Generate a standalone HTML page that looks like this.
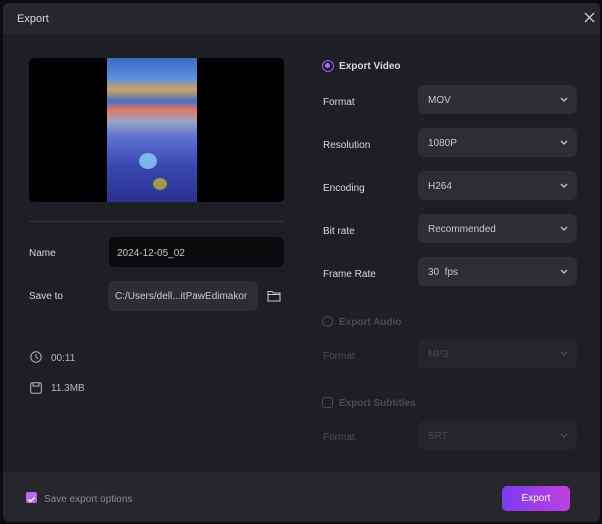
<!DOCTYPE html>
<html><head><style>
*{margin:0;padding:0;box-sizing:border-box}
body{width:602px;height:524px;background:#0c0c0e;font-family:"Liberation Sans",sans-serif;overflow:hidden;position:relative}
.dlg{position:absolute;left:3px;top:3px;width:597px;height:519px;background:#1e1f25;border-radius:6px;overflow:hidden}
.hdr{position:absolute;left:0;top:0;width:100%;height:31px;background:#26272d;color:#d8d8dc;font-size:11px;padding:10px 0 0 14px}
.t{position:absolute;font-size:10px;color:#d8d8dc}
.sel{position:absolute;left:415px;width:159px;height:29px;background:#2d2e34;border-radius:6px;font-size:10px;color:#c8c8cc;padding:10px 0 0 10px}
.sel svg{position:absolute;right:9px;top:12px}
.dim{background:#24252a;color:#4a4b52}
.foot{position:absolute;left:0;top:469px;width:100%;height:50px;background:#26272c}
</style></head><body>
<div class="dlg">
<div class="hdr">Export</div>
<svg style="position:absolute;left:581px;top:9px" width="11" height="11" viewBox="0 0 11 11"><path d="M1 1l9 9M10 1l-9 9" stroke="#c8c8cc" stroke-width="1.4"/></svg>
<div style="position:absolute;left:26px;top:55px;width:255px;height:144px;background:#000;border-radius:5px;overflow:hidden">
<div style="position:absolute;left:78px;top:0;width:90px;height:144px;background:linear-gradient(180deg,#3a6bc8 0%,#5b8ee0 14%,#c9a560 22%,#4a70c8 30%,#e07a60 36%,#9aa5c8 44%,#6070d0 55%,#3848b0 75%,#2a3090 100%)"></div>
<div style="position:absolute;left:110px;top:95px;width:18px;height:16px;border-radius:50%;background:#8fd0ff;opacity:.8"></div>
<div style="position:absolute;left:124px;top:120px;width:14px;height:12px;border-radius:50%;background:#b8b040;opacity:.8"></div>
</div>
<div style="position:absolute;left:26px;top:218px;width:255px;height:1px;background:#33343a"></div>
<div class="t" style="left:26px;top:245px">Name</div>
<div style="position:absolute;left:106px;top:234px;width:175px;height:30px;background:#0b0b0d;border-radius:6px;font-size:10px;color:#c8c8cc;padding:11px 0 0 8px">2024-12-05_02</div>
<div class="t" style="left:26px;top:288px">Save to</div>
<div style="position:absolute;left:105px;top:278px;width:150px;height:30px;background:#2d2e34;border-radius:6px;font-size:10px;color:#c8c8cc;padding:10px 0 0 7px">C:/Users/dell...itPawEdimakor</div>
<svg style="position:absolute;left:264px;top:287px" width="14" height="12" viewBox="0 0 14 12"><path d="M1 1.5h4l1.5 1.5H13v8H1z M1 4.5h12" fill="none" stroke="#c8c8cc" stroke-width="1.1"/></svg>
<svg style="position:absolute;left:27px;top:348px" width="12" height="12" viewBox="0 0 12 12"><circle cx="6" cy="6" r="5.2" fill="none" stroke="#b8b8bc" stroke-width="1"/><path d="M6 3v3l2 2" fill="none" stroke="#b8b8bc" stroke-width="1"/></svg>
<div class="t" style="left:48px;top:350px;color:#b8b8bc">00:11</div>
<svg style="position:absolute;left:27px;top:379px" width="12" height="12" viewBox="0 0 12 12"><rect x="0.7" y="0.7" width="10.6" height="10.6" rx="1.5" fill="none" stroke="#b8b8bc" stroke-width="1"/><path d="M3 1v3h6V1" fill="none" stroke="#b8b8bc" stroke-width="1"/></svg>
<div class="t" style="left:48px;top:380px;color:#b8b8bc">11.3MB</div>

<div style="position:absolute;left:319px;top:57px;width:12px;height:12px;border-radius:50%;border:1.5px solid #a855f7;background:#1e1f25"><div style="margin:2px;width:5px;height:5px;border-radius:50%;background:#b06af0"></div></div>
<div class="t" style="left:336px;top:58px;font-weight:bold">Export Video</div>
<div class="t" style="left:320px;top:94px">Format</div>
<div class="sel" style="top:82px">MOV<svg width="8" height="5"><path d="M1 1l3 3 3-3" fill="none" stroke="#c8c8cc" stroke-width="1.3"/></svg></div>
<div class="t" style="left:320px;top:137px">Resolution</div>
<div class="sel" style="top:125px">1080P<svg width="8" height="5"><path d="M1 1l3 3 3-3" fill="none" stroke="#c8c8cc" stroke-width="1.3"/></svg></div>
<div class="t" style="left:320px;top:180px">Encoding</div>
<div class="sel" style="top:168px">H264<svg width="8" height="5"><path d="M1 1l3 3 3-3" fill="none" stroke="#c8c8cc" stroke-width="1.3"/></svg></div>
<div class="t" style="left:320px;top:223px">Bit rate</div>
<div class="sel" style="top:211px">Recommended<svg width="8" height="5"><path d="M1 1l3 3 3-3" fill="none" stroke="#c8c8cc" stroke-width="1.3"/></svg></div>
<div class="t" style="left:320px;top:266px">Frame Rate</div>
<div class="sel" style="top:254px">30&nbsp; fps<svg width="8" height="5"><path d="M1 1l3 3 3-3" fill="none" stroke="#c8c8cc" stroke-width="1.3"/></svg></div>

<div style="position:absolute;left:319px;top:313px;width:11px;height:11px;border-radius:50%;border:1px solid #4a4b52"></div>
<div class="t" style="left:336px;top:314px;font-weight:bold;color:#4a4b52">Export Audio</div>
<div class="t" style="left:320px;top:348px;color:#4a4b52">Format</div>
<div class="sel dim" style="top:336px">MP3<svg width="8" height="5"><path d="M1 1l3 3 3-3" fill="none" stroke="#4a4b52" stroke-width="1.3"/></svg></div>
<div style="position:absolute;left:319px;top:394px;width:11px;height:11px;border-radius:3px;border:1px solid #4a4b52"></div>
<div class="t" style="left:336px;top:395px;font-weight:bold;color:#4a4b52">Export Subtitles</div>
<div class="t" style="left:320px;top:429px;color:#4a4b52">Format</div>
<div class="sel dim" style="top:418px">SRT<svg width="8" height="5"><path d="M1 1l3 3 3-3" fill="none" stroke="#4a4b52" stroke-width="1.3"/></svg></div>

<div class="foot"></div>
<div style="position:absolute;left:23px;top:489px;width:11px;height:11px;border-radius:2px;background:#b86ae8"><svg width="11" height="11"><path d="M2.5 5.5l2 2 4-4" fill="none" stroke="#fff" stroke-width="1.3"/></svg></div>
<div class="t" style="left:41px;top:491px;color:#8a8b92">Save export options</div>
<div style="position:absolute;left:499px;top:483px;width:68px;height:25px;border-radius:5px;background:linear-gradient(90deg,#7a3cf0,#c040e0);color:#fff;font-size:10px;text-align:center;line-height:26px">Export</div>
</div>
</body></html>
